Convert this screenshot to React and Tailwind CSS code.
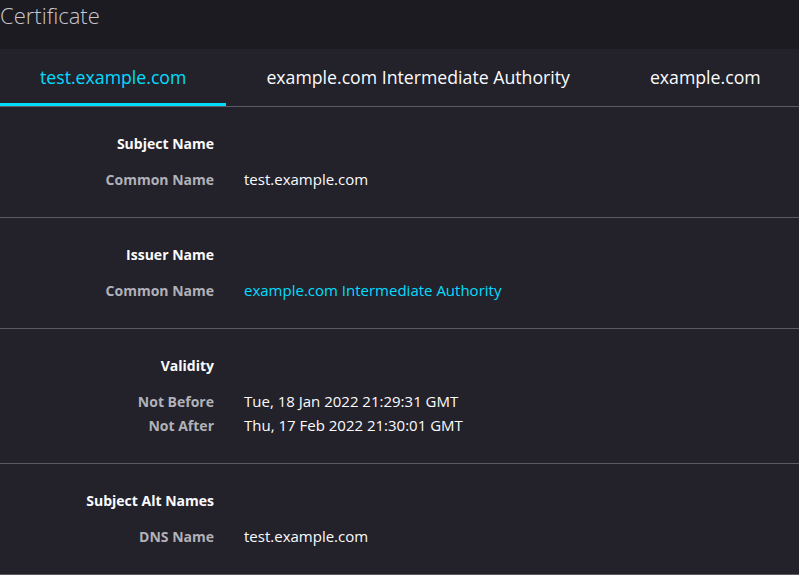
const sections = [
  {
    title: "Subject Name",
    rows: [{ label: "Common Name", value: "test.example.com" }],
  },
  {
    title: "Issuer Name",
    rows: [{ label: "Common Name", value: "example.com Intermediate Authority", link: true }],
  },
  {
    title: "Validity",
    rows: [
      { label: "Not Before", value: "Tue, 18 Jan 2022 21:29:31 GMT" },
      { label: "Not After", value: "Thu, 17 Feb 2022 21:30:01 GMT" },
    ],
  },
  {
    title: "Subject Alt Names",
    rows: [{ label: "DNS Name", value: "test.example.com" }],
  },
];

const tabs = ["test.example.com", "example.com Intermediate Authority", "example.com"];

const App = () => {
  return (
    <main className="min-h-[575px] w-full overflow-hidden bg-[#1c1b22] font-['Open_Sans',sans-serif] text-[#fbfbfe]">
      <h1 className="h-[49px] pt-[2px] text-[22px] font-light leading-[27px] text-[#c7c7cf]">Certificate</h1>
      <section className="bg-[#23222b]">
        <nav className="flex border-b border-[#5b5b66]">
          {tabs.map((tab, i) => (
            <div
              key={tab}
              className={
                i === 0
                  ? "flex h-[57px] flex-none items-center whitespace-nowrap border-b-[3px] border-[#00ddff] px-[40px] pt-[3px] text-[17.7px] text-[#00ddff]"
                  : "flex h-[57px] flex-none items-center whitespace-nowrap border-b-[3px] border-transparent px-[40px] pt-[3px] text-[17.7px] text-[#fbfbfe]"
              }
            >
              {tab}
            </div>
          ))}
        </nav>
        {sections.map((section) => (
          <Section key={section.title} {...section} />
        ))}
      </section>
    </main>
  );
};

const Section = ({ title, rows }) => (
  <div className="border-b border-[#5b5b66] py-[26px]">
    <div className="grid grid-cols-[214px_1fr] gap-x-[30px]">
      <h2 className="text-right text-[14px] font-bold leading-[22px] text-[#fbfbfe]">{title}</h2>
      <div />
    </div>
    <div className="mt-[12px] grid grid-cols-[214px_1fr] gap-x-[30px]">
      {rows.map((row) => (
        <Row key={row.label} {...row} />
      ))}
    </div>
  </div>
);

const Row = ({ label, value, link }) => (
  <>
    <span className="h-[24px] pt-[1px] text-right text-[14px] font-bold leading-[23px] text-[#b1b1b9]">{label}</span>
    <span className={link ? "h-[24px] text-[15px] leading-[24px] text-[#00ddff]" : "h-[24px] text-[15px] leading-[24px] text-[#fbfbfe]"}>
      {value}
    </span>
  </>
);

export default App;
